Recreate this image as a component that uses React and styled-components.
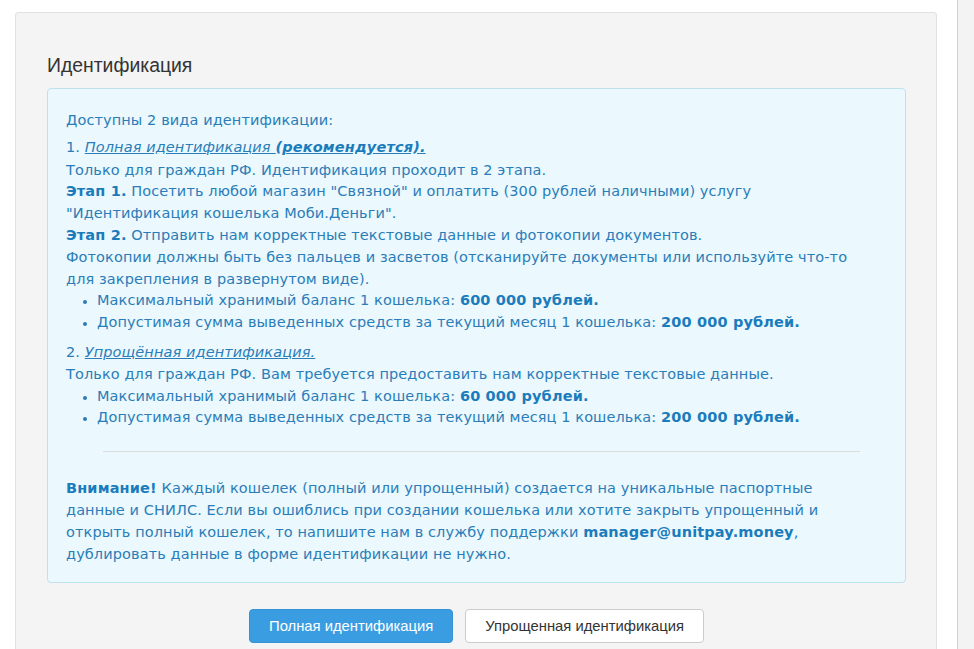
import React from "react";
import styled, { createGlobalStyle } from "styled-components";

const Global = createGlobalStyle`
  html, body { margin: 0; padding: 0; background: #fff; }
  body { font-family: "DejaVu Sans", Verdana, sans-serif; }
`;

const Page = styled.div`
  display: flex;
  min-height: 649px;
`;

const Main = styled.div`
  width: 957px;
  box-sizing: border-box;
  padding: 12px 20px 0 15px;
`;

const Strip = styled.div`
  flex: 1;
  background: #f3f3f3;
  border-left: 1px solid #d0d0d0;
`;

const Panel = styled.section`
  background: #f4f4f4;
  border: 1px solid #e1e1e1;
  border-bottom: none;
  border-radius: 4px 4px 0 0;
  padding: 41px 30px 20px 31px;
  min-height: 640px;
  box-sizing: border-box;
`;

const Title = styled.h2`
  margin: 0 0 12px;
  font-family: "Liberation Sans", Arial, sans-serif;
  font-weight: 400;
  font-size: 19.4px;
  line-height: 22px;
  color: #333;
`;

const InfoBox = styled.div`
  background: #ebf8fe;
  border: 1px solid #bde2ec;
  border-radius: 4px;
  padding: 21px 18px 17px;
  color: #2a7db8;
  font-family: "DejaVu Sans", Verdana, sans-serif;
  font-size: 14.5px;
  letter-spacing: 0.1px;
  line-height: 21.8px;
`;

const Para = styled.p`
  margin: 0 0 ${(p) => p.$mb || 0}px;
`;

const Strong = styled.b`
  font-weight: 700;
  color: #1b7cbc;
  letter-spacing: 0.15px;
`;

const LinkText = styled.span`
  font-style: italic;
  text-decoration: underline;
`;

const List = styled.ul`
  margin: 0 0 ${(p) => p.$mb || 0}px;
  padding-left: 31px;
  li::marker { font-size: 12px; }
`;

const Rule = styled.hr`
  border: none;
  border-top: 1px solid #dcdcdc;
  margin: 22px 27px 26px 37px;
`;

const Actions = styled.div`
  display: flex;
  justify-content: center;
  gap: 12px;
  margin-top: 26px;
`;

const Button = styled.button`
  height: 34px;
  padding: 0 19px;
  border-radius: 4px;
  font-family: "Liberation Sans", Arial, sans-serif;
  font-size: 14.8px;
  cursor: pointer;
  background: ${(p) => (p.$primary ? "#3a9de2" : "#fff")};
  color: ${(p) => (p.$primary ? "#fff" : "#333")};
  border: 1px solid ${(p) => (p.$primary ? "#3592d4" : "#cccccc")};
`;

export default function App() {
  return (
    <>
      <Global />
      <Page>
        <Main>
          <Panel>
            <Title>Идентификация</Title>
            <InfoBox>
              <Para $mb={5}>Доступны 2 вида идентификации:</Para>
              <Para $mb={1}>
                1. <LinkText>Полная идентификация <Strong as="span" style={{ fontWeight: 700 }}>(рекомендуется).</Strong></LinkText>
              </Para>
              <Para>
                Только для граждан РФ. Идентификация проходит в 2 этапа.
                <br />
                <Strong>Этап 1.</Strong> Посетить любой магазин "Связной" и оплатить (300 рублей наличными) услугу
                <br />
                "Идентификация кошелька Моби.Деньги".
                <br />
                <Strong>Этап 2.</Strong> Отправить нам корректные текстовые данные и фотокопии документов.
                <br />
                Фотокопии должны быть без пальцев и засветов (отсканируйте документы или используйте что-то
                <br />
                для закрепления в развернутом виде).
              </Para>
              <List $mb={8}>
                <li>Максимальный хранимый баланс 1 кошелька: <Strong>600 000 рублей.</Strong></li>
                <li>Допустимая сумма выведенных средств за текущий месяц 1 кошелька: <Strong>200 000 рублей.</Strong></li>
              </List>
              <Para>
                2. <LinkText>Упрощённая идентификация.</LinkText>
                <br />
                Только для граждан РФ. Вам требуется предоставить нам корректные текстовые данные.
              </Para>
              <List>
                <li>Максимальный хранимый баланс 1 кошелька: <Strong>60 000 рублей.</Strong></li>
                <li>Допустимая сумма выведенных средств за текущий месяц 1 кошелька: <Strong>200 000 рублей.</Strong></li>
              </List>
              <Rule />
              <Para>
                <Strong>Внимание!</Strong> Каждый кошелек (полный или упрощенный) создается на уникальные паспортные
                <br />
                данные и СНИЛС. Если вы ошиблись при создании кошелька или хотите закрыть упрощенный и
                <br />
                открыть полный кошелек, то напишите нам в службу поддержки <Strong>manager@unitpay.money</Strong>,
                <br />
                дублировать данные в форме идентификации не нужно.
              </Para>
            </InfoBox>
            <Actions>
              <Button $primary>Полная идентификация</Button>
              <Button>Упрощенная идентификация</Button>
            </Actions>
          </Panel>
        </Main>
        <Strip />
      </Page>
    </>
  );
}
